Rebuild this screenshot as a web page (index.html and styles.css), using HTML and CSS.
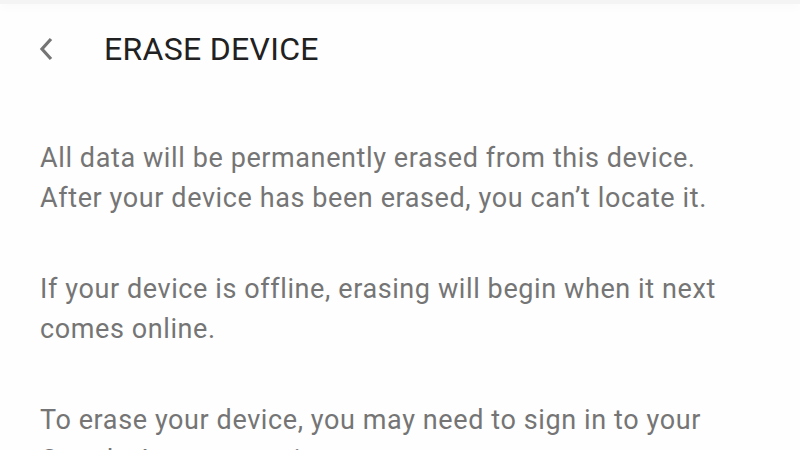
FILE: index.html
```html
<!DOCTYPE html>
<html>
<head>
<meta charset="utf-8">
<link rel="stylesheet" href="styles.css">
</head>
<body>
<div class="topbar"></div>
<header class="header">
  <button class="back" aria-label="Back">
    <svg width="18" height="26" viewBox="0 0 18 26"><path d="M14 3 L5 13 L14 23" fill="none" stroke="#757575" stroke-width="3.2"/></svg>
  </button>
  <h1 class="title">ERASE DEVICE</h1>
</header>
<main class="content">
  <p>All data will be permanently erased from this device.<br>After your device has been erased, you can’t locate it.</p>
  <p>If your device is offline, erasing will begin when it next<br>comes online.</p>
  <p>To erase your device, you may need to sign in to your<br>Google Account again.</p>
</main>
</body>
</html>
```
FILE: styles.css
```css
html, body {
  margin: 0;
  padding: 0;
  background: #fefefe;
  font-family: Roboto, "Noto Sans", sans-serif;
  overflow: hidden;
  height: 450px;
}
.topbar {
  height: 4px;
  background: #f4f4f4;
  box-shadow: 0 2px 10px rgba(0,0,0,0.04);
}
.header {
  display: flex;
  align-items: center;
  padding: 26px 0 0 37px;
  height: 38px;
}
.back {
  border: 0;
  background: none;
  padding: 0;
  width: 18px;
  height: 26px;
  display: flex;
  margin-right: 49px;
}
.title {
  margin: 0;
  font-size: 32px;
  font-weight: 400;
  color: #212121;
  letter-spacing: 0.3px;
}
.content {
  padding: 70px 0 0 40px;
}
.content p {
  margin: 0 0 51px;
  font-size: 27px;
  letter-spacing: 0.6px;
  line-height: 40px;
  color: #757575;
}
```
